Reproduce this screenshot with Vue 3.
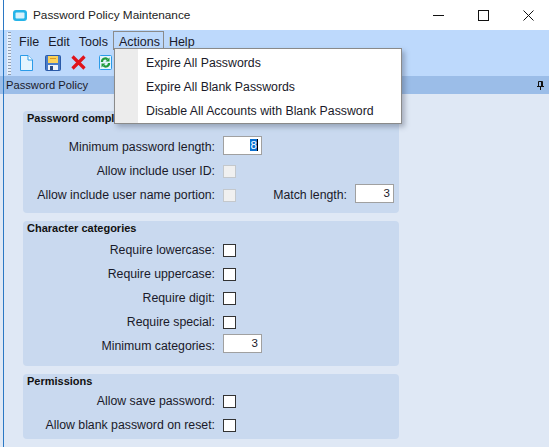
<template>
	<div class="window">
		<div class="edge"></div>
		<div class="titlebar">
			<svg class="app-icon" width="14" height="11" viewBox="0 0 14 11">
				<rect width="14" height="11" rx="3" fill="#25b4e8"/>
				<rect x="2.500" y="2.500" width="9" height="6" rx="1" fill="#d8f2fc"/>
			</svg>
			<span class="title">Password Policy Maintenance</span>
			<div class="controls">
				<svg width="11" height="11" viewBox="0 0 11 11"><path d="M0 5.500H11" stroke="#111" fill="none"/></svg>
				<svg width="11" height="11" viewBox="0 0 11 11"><rect x="0.500" y="0.500" width="10" height="10" stroke="#111" fill="none"/></svg>
				<svg width="11" height="11" viewBox="0 0 11 11"><path d="M0.500 0.500L10.500 10.500M10.500 0.500L0.500 10.500" stroke="#111" fill="none"/></svg>
			</div>
		</div>

		<div class="body">
			<div class="bars">
				<div class="grip"></div>
				<div class="bars-main">
					<div class="menubar">
						<span v-for="m in menus" :key="m" class="menu" :class="{ open: m === 'Actions' }">{{ m }}</span>
					</div>
					<div class="toolbar">
						<svg width="13" height="16" viewBox="0 0 13 16">
							<path d="M0.500 0.500H8L12.500 5V15.500H0.500Z" fill="#e4f4fe" stroke="#2b9be8"/>
							<path d="M8 0.500V5H12.500" fill="#fff" stroke="#2b9be8"/>
						</svg>
						<svg width="16" height="16" viewBox="0 0 16 16">
							<rect x="0.500" y="0.500" width="15" height="15" rx="1" fill="#4a7cc8" stroke="#2a5aa8"/>
							<rect x="3" y="1" width="10" height="7" fill="#fbd25a"/>
							<path d="M5 3.500H11" stroke="#d89a20"/>
							<rect x="3" y="10" width="10" height="5" fill="#eef3fa"/>
							<rect x="5" y="11" width="3" height="4" fill="#2a4a80"/>
						</svg>
						<svg width="15" height="15" viewBox="0 0 15 15">
							<path d="M1.500 1.500L13.500 13.500M13.500 1.500L1.500 13.500" stroke="#e0141c" stroke-width="3.200"/>
						</svg>
						<svg width="13" height="15" viewBox="0 0 13 15">
							<rect x="0.500" y="0.500" width="12" height="14" rx="1" fill="#e4f4fe" stroke="#2b9be8"/>
							<path d="M3 7A3.200 3.200 0 0 1 8.500 4.500M10 8A3.200 3.200 0 0 1 4.500 10.500" stroke="#1f9a3c" stroke-width="2.200" fill="none"/>
							<path d="M6.500 6.500H10.500V2.500Z M6.500 8.500H2.500V12.500Z" fill="#1f9a3c"/>
						</svg>
					</div>
				</div>
			</div>

			<div class="panel-head">
				<span>Password Policy</span>
				<svg class="pin" width="7" height="9" viewBox="0 0 7 9">
					<path d="M1.500 0.500H5.500V5.500H1.500Z" fill="#9bbde8" stroke="#111"/>
					<path d="M0 5.500H7M3.500 5.500V9M4.500 1V5" stroke="#111" fill="none"/>
				</svg>
			</div>

			<div class="content">
				<section class="group first">
					<h3>Password complexity</h3>
					<div class="row">
						<label>Minimum password length:</label>
						<span class="num"><span class="sel">8</span></span>
					</div>
					<div class="row">
						<label>Allow include user ID:</label>
						<span class="check off"></span>
					</div>
					<div class="row">
						<label>Allow include user name portion:</label>
						<span class="check off"></span>
						<label class="match">Match length:</label>
						<span class="num">3</span>
					</div>
				</section>

				<section class="group second">
					<h3>Character categories</h3>
					<div v-for="c in categories" :key="c" class="row">
						<label>{{ c }}</label>
						<span class="check"></span>
					</div>
					<div class="row">
						<label>Minimum categories:</label>
						<span class="num">3</span>
					</div>
				</section>

				<section class="group third">
					<h3>Permissions</h3>
					<div v-for="p in permissions" :key="p" class="row">
						<label>{{ p }}</label>
						<span class="check"></span>
					</div>
				</section>
			</div>
		</div>

		<div class="popup">
			<div v-for="a in actions" :key="a" class="popup-item">{{ a }}</div>
		</div>
	</div>
</template>

<script setup>
const menus = ["File", "Edit", "Tools", "Actions", "Help"]
const actions = [
	"Expire All Passwords",
	"Expire All Blank Passwords",
	"Disable All Accounts with Blank Password"
]
const categories = [
	"Require lowercase:",
	"Require uppercase:",
	"Require digit:",
	"Require special:"
]
const permissions = ["Allow save password:", "Allow blank password on reset:"]
</script>

<style>
html, body {
	margin: 0;
	background: #fff;
	overflow: hidden;
}
</style>

<style scoped>
.window {
	position: relative;
	width: 549px;
	height: 448px;
	font-family: "Liberation Sans", Arial, sans-serif;
	font-size: 12.300px;
	color: #1a1a2a;
	overflow: hidden;
	background: #fff;
}

.edge {
	position: absolute;
	left: 3px;
	top: 0;
	bottom: 1px;
	width: 1px;
	background: #2b78c4;
}

.titlebar {
	height: 30px;
	display: flex;
	align-items: center;
	padding-left: 13px;
}

.app-icon {
	margin-right: 6px;
}

.title {
	color: #222;
	font-size: 11.800px;
}

.controls {
	margin-left: auto;
	display: flex;
	gap: 34px;
	padding-right: 15px;
}

.body {
	background: #dfe8f5;
	height: 417px;
}

.bars {
	display: flex;
	height: 46px;
	background: #bdd9fc;
	padding-left: 4px;
}

.grip {
	width: 3px;
	margin: 2px 0 1px 3px;
	border-left: 1px solid #e4eefb;
	background: repeating-linear-gradient(#8f9cb0 0 1px, #e4eefb 1px 3px);
}

.bars-main {
	flex: 1;
}

.menubar {
	display: flex;
	height: 19px;
	padding: 1px 0 0 3px;
	font-size: 12.500px;
}

.menu {
	padding: 0 3px 0 4px;
	height: 18px;
	line-height: 21px;
	border: 1px solid transparent;
	border-bottom: none;
	box-sizing: content-box;
}

.menu.open {
	border-color: #8a8a8a;
	margin-left: 1px;
	padding-left: 5px;
}

.toolbar {
	display: flex;
	align-items: flex-start;
	height: 26px;
	padding: 5px 0 0 9px;
	box-sizing: border-box;
}

.toolbar svg:nth-child(2) {
	margin-left: 12px;
}

.toolbar svg:nth-child(3) {
	margin-left: 10px;
}

.toolbar svg:nth-child(4) {
	margin-left: 13px;
}

.panel-head {
	height: 18px;
	background: #9bbde8;
	display: flex;
	align-items: center;
	justify-content: space-between;
	padding: 0 5px 0 6px;
	font-size: 11.200px;
}

.content {
	padding: 17px 0 0 23px;
	display: flex;
	flex-direction: column;
	width: 376px;
}

.group {
	background: #c9d9ef;
	border-radius: 4px;
	box-sizing: border-box;
}

.group + .group {
	margin-top: 8px;
}

.group.first {
	height: 102px;
}

.group.second {
	height: 145px;
}

.group.third {
	height: 65px;
}

h3 {
	margin: 0;
	padding-left: 4px;
	font-size: 11px;
	font-weight: bold;
	line-height: 15px;
	color: #111;
}

.first h3 {
	height: 25px;
}

.second h3 {
	height: 18px;
}

.third h3 {
	height: 16px;
}

.row {
	height: 24px;
	display: flex;
	align-items: flex-start;
}

label {
	width: 192px;
	flex: none;
	text-align: right;
	white-space: nowrap;
	line-height: 22px;
}

.check {
	width: 13px;
	height: 13px;
	box-sizing: border-box;
	border: 1px solid #333;
	background: #fff;
	margin: 5px 0 0 8px;
}

.check.off {
	border-color: #c4c8cc;
	background: #f0f0f0;
}

.num {
	width: 39px;
	height: 19px;
	line-height: 16px;
	box-sizing: border-box;
	border: 1px solid #a0a0a0;
	background: #fff;
	text-align: right;
	margin-left: 8px;
	padding-right: 3px;
	font-size: 11.500px;
}

.second .num {
	margin-top: -1px;
}

.sel {
	background: #0a6fd0;
	color: #fff;
	border-right: 1px solid #000;
	padding-left: 1px;
}

label.match {
	width: 111px;
}

.popup {
	position: absolute;
	left: 114px;
	top: 48px;
	width: 288px;
	height: 76px;
	box-sizing: border-box;
	background: linear-gradient(to right, #ececec 23px, #fff 23px);
	border: 1px solid #8a8a8a;
	box-shadow: 3px 3px 5px rgba(60, 70, 90, 0.35);
	padding-top: 2px;
}

.popup-item {
	height: 24px;
	line-height: 24px;
	padding-left: 31px;
	white-space: nowrap;
}
</style>
